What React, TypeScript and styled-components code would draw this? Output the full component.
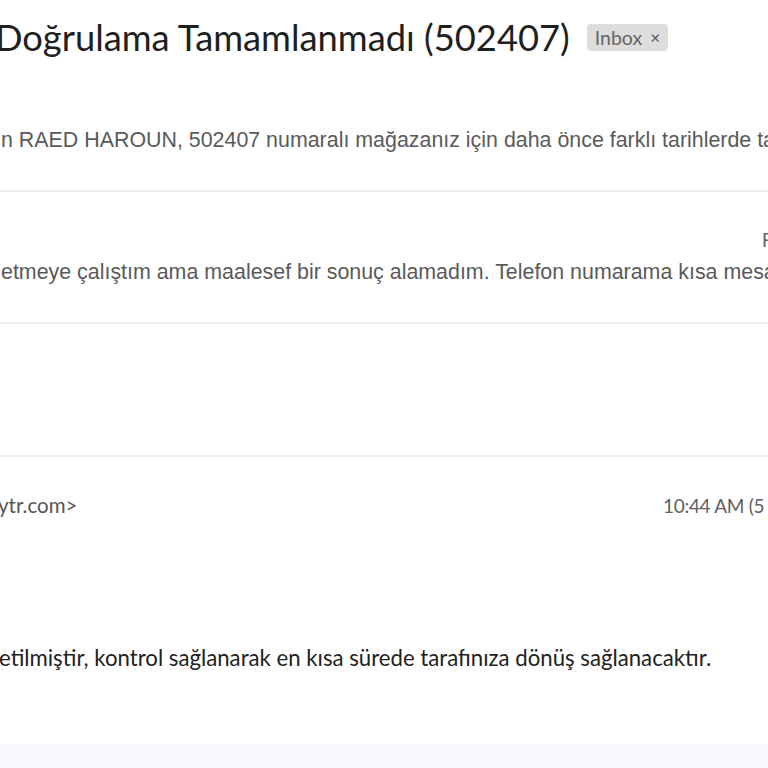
import React from 'react';
import styled, { createGlobalStyle } from 'styled-components';

const Global = createGlobalStyle`
  html, body { margin: 0; padding: 0; background: #ffffff; }
  #root { width: 768px; height: 768px; }
`;

const Page = styled.div`
  width: 768px;
  height: 768px;
  overflow: hidden;
  background: #ffffff;
  display: flex;
  flex-direction: column;
`;

const Header = styled.header`
  display: flex;
  align-items: center;
  gap: 17px;
  height: 74px;
  margin-left: -5px;
  white-space: nowrap;
`;

const Title = styled.h1`
  margin: 0;
  font-family: "Lato", "Open Sans", sans-serif;
  font-weight: 400;
  font-size: 36.3px;
  line-height: 44px;
  color: #1f1f1f;
`;

const Badge = styled.span`
  display: inline-flex;
  align-items: center;
  gap: 8px;
  height: 27px;
  padding: 0 8px;
  border-radius: 4px;
  background: #dddddd;
  color: #666666;
  font-family: "Lato", "Open Sans", sans-serif;
  font-size: 19.5px;
`;

const Close = styled.span`
  font-size: 17px;
  color: #555555;
`;

const Message = styled.section<{ $h?: number; $pt?: number }>`
  display: flex;
  flex-direction: column;
  gap: 8px;
  box-sizing: border-box;
  height: ${p => (p.$h ? `${p.$h}px` : 'auto')};
  padding-top: ${p => p.$pt ?? 0}px;
  border-bottom: 2px solid #eeeeee;
  white-space: nowrap;
`;

const Snippet = styled.div`
  font-family: "Liberation Sans", Arial, sans-serif;
  font-size: 21.4px;
  line-height: 24px;
  color: #5a5a5a;
  margin-left: 1px;
`;

const MetaRow = styled.div`
  display: flex;
  height: 24px;
  align-items: center;
`;

const Meta = styled.span<{ $w: number }>`
  margin-left: auto;
  width: ${p => p.$w}px;
  flex: none;
  font-family: "Liberation Sans", Arial, sans-serif;
  font-size: 20px;
  color: #666666;
  overflow: visible;
`;

const Expanded = styled.section`
  flex: 1;
  display: flex;
  flex-direction: column;
  padding-top: 36px;
  white-space: nowrap;
`;

const SenderRow = styled.div`
  display: flex;
  align-items: center;
  height: 24px;
`;

const Email = styled.span`
  font-family: "Lato", "Open Sans", sans-serif;
  font-size: 20.5px;
  color: #555555;
  margin-left: -2px;
`;

const Time = styled.span`
  margin-left: auto;
  width: 105px;
  flex: none;
  font-family: "Lato", "Open Sans", sans-serif;
  font-size: 19px;
  color: #5f5f5f;
  letter-spacing: -0.3px;
`;

const Body = styled.p`
  margin: 129px 0 0 -1px;
  font-family: "Lato", "Open Sans", sans-serif;
  font-size: 22.2px;
  line-height: 24px;
  color: #222222;
`;

const Footer = styled.div`
  height: 24px;
  background: #f7f8fc;
  flex: none;
`;

export default function App() {
  return (
    <>
      <Global />
      <Page>
        <Header>
          <Title>Doğrulama Tamamlanmadı (502407)</Title>
          <Badge>
            Inbox <Close>×</Close>
          </Badge>
        </Header>
        <Message $h={118} $pt={54}>
          <Snippet>n RAED HAROUN, 502407 numaralı mağazanız için daha önce farklı tarihlerde talep oluşturdunuz</Snippet>
        </Message>
        <Message $h={132} $pt={36}>
          <MetaRow>
            <Meta $w={6}>RAED HAROUN</Meta>
          </MetaRow>
          <Snippet>etmeye çalıştım ama maalesef bir sonuç alamadım. Telefon numarama kısa mesaj gelmiyor</Snippet>
        </Message>
        <Message $h={133} />
        <Expanded>
          <SenderRow>
            <Email>ytr.com&gt;</Email>
            <Time>10:44 AM (5 hours ago)</Time>
          </SenderRow>
          <Body>etilmiştir, kontrol sağlanarak en kısa sürede tarafınıza dönüş sağlanacaktır.</Body>
        </Expanded>
        <Footer />
      </Page>
    </>
  );
}
